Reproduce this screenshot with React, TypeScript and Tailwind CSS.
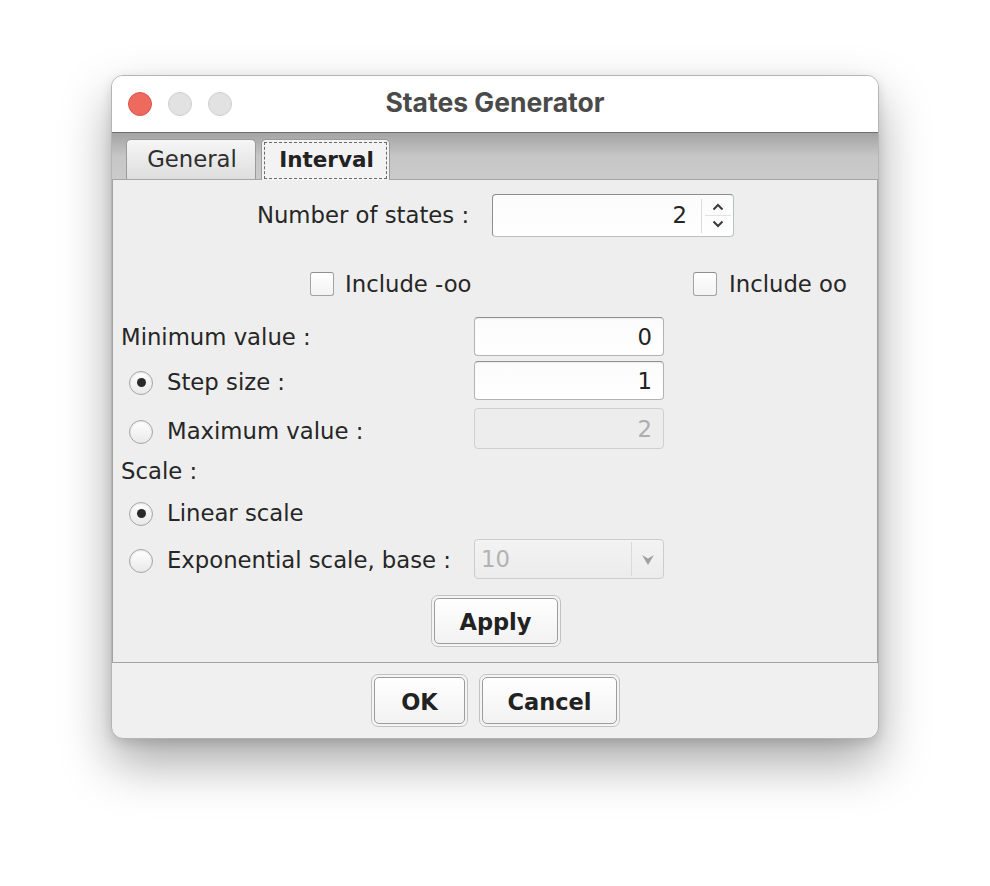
import React from "react";

const F = { fontFamily: '"DejaVu Sans", "Liberation Sans", sans-serif' };

function Radio({ checked }: { checked?: boolean }) {
  return (
    <div className="w-[24px] h-[24px] rounded-full border border-[#a6a6a6] bg-gradient-to-b from-[#ffffff] to-[#e9e9e9] shadow-[inset_0_1px_2px_rgba(0,0,0,0.10)] flex items-center justify-center shrink-0">
      {checked && <div className="w-[9px] h-[9px] rounded-full bg-[#2a2a2a]" />}
    </div>
  );
}

function Check() {
  return (
    <div className="w-[24px] h-[24px] rounded-[3px] border border-[#a3a3a3] border-t-[#8e8e8e] bg-gradient-to-b from-[#ffffff] to-[#f3f3f3] shrink-0" />
  );
}

function Field({ value, disabled }: { value: string; disabled?: boolean }) {
  return (
    <div
      className={
        "w-[190px] h-full rounded-[4px] border flex items-center justify-end pr-[11px] pt-[1px] " +
        (disabled
          ? "border-[#cfcfcf] bg-[#ededed] text-[#adadad]"
          : "border-[#b3b3b3] border-t-[#8f8f8f] bg-gradient-to-b from-[#fbfbfb] to-[#ffffff] text-[#222222] shadow-[inset_0_1px_1px_rgba(0,0,0,0.06)]")
      }
    >
      {value}
    </div>
  );
}

function Button({ label, w, h }: { label: string; w: string; h: string }) {
  return (
    <div
      className={
        w +
        " " +
        h +
        " rounded-[7px] border border-[#c2c2c2] p-[2px] bg-[#f4f4f4] flex"
      }
    >
      <div className="flex-1 rounded-[5px] border border-[#9c9c9c] bg-gradient-to-b from-[#ffffff] to-[#f2f2f2] flex items-center justify-center pt-[4px] font-bold text-[22.5px] text-[#222222]">
        {label}
      </div>
    </div>
  );
}

export default function App() {
  return (
    <div className="w-[990px] h-[886px] bg-white pl-[111px] pt-[75px]" style={F}>
      <div className="w-[768px] h-[664px] rounded-[12px] overflow-hidden bg-[#f0f0f0] border border-[#b4b4b4] shadow-[0_24px_50px_rgba(0,0,0,0.34),0_4px_12px_rgba(0,0,0,0.12)] flex flex-col">
        {/* Title bar */}
        <div className="h-[56px] bg-white flex items-center relative shrink-0">
          <div className="flex items-center gap-[16px] pl-[16px]">
            <div className="w-[24px] h-[24px] rounded-full bg-[#ee6a5f] border border-[#d9584e]" />
            <div className="w-[24px] h-[24px] rounded-full bg-[#e2e2e2] border border-[#cfcfcf]" />
            <div className="w-[24px] h-[24px] rounded-full bg-[#e2e2e2] border border-[#cfcfcf]" />
          </div>
          <div
            className="absolute inset-0 flex items-center justify-center text-[26.5px] font-bold text-[#4a4a4a] pb-[2px]"
            style={{ fontFamily: 'Inter, "Liberation Sans", sans-serif' }}
          >
            States Generator
          </div>
        </div>
        {/* Tab strip */}
        <div className="h-[48px] border-t border-[#6f6f6f] bg-gradient-to-b from-[#a3a3a3] via-[#c6c6c6] to-[#cbcbcb] flex items-end pl-[14px] gap-[5px] border-b border-b-[#a6a6a6] shrink-0">
          <div className="w-[130px] h-[40px] rounded-t-[5px] border border-b-0 border-[#9a9a9a] bg-gradient-to-b from-[#f6f6f6] to-[#dedede] flex items-center justify-center pl-[2px] text-[22.75px] text-[#2e2e2e]">
            General
          </div>
          <div className="w-[129px] h-[41px] -mb-[1px] rounded-t-[5px] border border-b-0 border-[#9a9a9a] bg-[#f3f3f3] p-[2px] pb-[1px] flex">
            <div className="flex-1 border border-dashed border-[#6a6a6a] flex items-center justify-center font-bold text-[21.5px] text-[#222222] pl-[2px]">
              Interval
            </div>
          </div>
        </div>
        {/* Panel */}
        <div className="h-[483px] bg-[#eeeeee] border-x border-b border-[#a3a3a3] flex flex-col text-[22.75px] text-[#262626] shrink-0">
          <div className="mt-[14px] h-[43px] flex items-center justify-center gap-[23px] pl-[1px]">
            <span>Number of states :</span>
            <div className="w-[242px] h-full rounded-[4px] border border-[#b9c2c2] border-t-[#8d8d8d] border-l-[#8d8d8d] bg-gradient-to-b from-[#fbfbfb] to-[#ffffff] flex items-center justify-end">
              <span className="pr-[14px]">2</span>
              <div className="w-[32px] h-[34px] border-l border-[#dcdcdc] flex flex-col items-center justify-center">
                <svg width="12" height="8" viewBox="0 0 12 8">
                  <path d="M1.5 6.5 L6 2 L10.5 6.5" fill="none" stroke="#3a3a3a" strokeWidth="2" />
                </svg>
                <div className="w-[26px] h-[1px] bg-[#e2e2e2] my-[4px]" />
                <svg width="12" height="8" viewBox="0 0 12 8">
                  <path d="M1.5 1.5 L6 6 L10.5 1.5" fill="none" stroke="#3a3a3a" strokeWidth="2" />
                </svg>
              </div>
            </div>
          </div>
          <div className="mt-[29px] h-[36px] flex items-center pl-[197px]">
            <div className="w-[383px] flex items-center gap-[11px]">
              <Check />
              <span>Include -oo</span>
            </div>
            <div className="flex items-center gap-[12px]">
              <Check />
              <span>Include oo</span>
            </div>
          </div>
          <div className="mt-[15px] h-[39px] flex items-center">
            <div className="w-[361px] pl-[8px] pt-[1px]">Minimum value :</div>
            <Field value="0" />
          </div>
          <div className="mt-[5px] h-[39px] flex items-center">
            <div className="w-[361px] pl-[16px] flex items-center gap-[14px] pt-[4px]">
              <Radio checked />
              <span>Step size :</span>
            </div>
            <Field value="1" />
          </div>
          <div className="mt-[8px] h-[41px] flex items-center">
            <div className="w-[361px] pl-[16px] flex items-center gap-[14px] pt-[6px]">
              <Radio />
              <span>Maximum value :</span>
            </div>
            <Field value="2" disabled />
          </div>
          <div className="mt-[6px] h-[32px] flex items-center pl-[8px] pt-[1px]">Scale :</div>
          <div className="mt-[10px] h-[32px] flex items-center pl-[16px] gap-[14px] pt-[1px]">
            <Radio checked />
            <span>Linear scale</span>
          </div>
          <div className="mt-[10px] h-[40px] flex items-center">
            <div className="w-[361px] pl-[16px] flex items-center gap-[14px] pt-[3px]">
              <Radio />
              <span>Exponential scale, base :</span>
            </div>
            <div className="w-[190px] h-full rounded-[4px] border border-[#cdcdcd] bg-gradient-to-b from-[#f3f3f3] to-[#ececec] flex items-center">
              <span className="flex-1 pl-[6px] text-[#b3b3b3]">10</span>
              <div className="w-[32px] h-[34px] border-l border-[#dadada] flex items-center justify-center">
                <svg width="14" height="14" viewBox="0 0 14 14">
                  <path d="M1 3 L7 6.5 L13 3 L7 13 Z" fill="#a0a0a0" />
                </svg>
              </div>
            </div>
          </div>
          <div className="mt-[16px] h-[52px] flex justify-center pl-[1px]">
            <Button label="Apply" w="w-[130px]" h="h-[52px]" />
          </div>
        </div>
        {/* Bottom buttons */}
        <div className="flex-1 flex justify-center gap-[11px] pt-[11px] pl-[1px]">
          <Button label="OK" w="w-[97px]" h="h-[53px]" />
          <Button label="Cancel" w="w-[141px]" h="h-[53px]" />
        </div>
      </div>
    </div>
  );
}
